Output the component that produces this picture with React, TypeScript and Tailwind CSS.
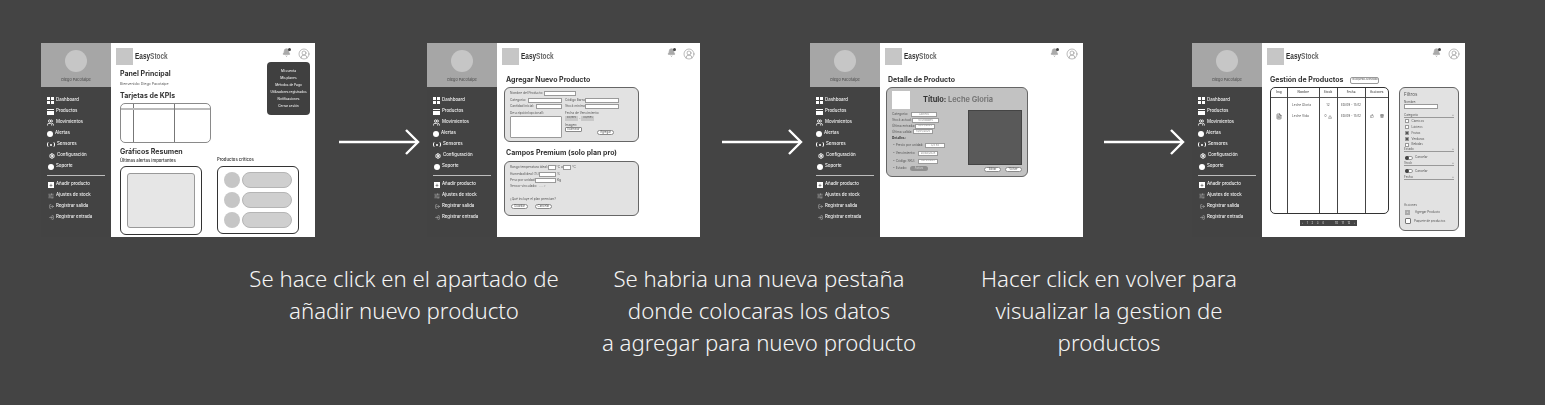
import type { ReactNode } from "react";
import { Bell, CircleUserRound, FileText, LogIn, LogOut, Settings, SlidersHorizontal, Trash2, TriangleAlert, Users, ThumbsUp } from "lucide-react";

const Dash = () => (
  <span className="grid grid-cols-2 gap-[1px] w-[7px] h-[7px]">
    <span className="bg-white" />
    <span className="bg-white" />
    <span className="bg-white" />
    <span className="bg-white" />
  </span>
);
const Box = () => (
  <span className="flex flex-col gap-[1px] w-[7px] h-[6px]">
    <span className="bg-white h-[1.5px]" />
    <span className="bg-white flex-1" />
  </span>
);
const Dot = () => <span className="block w-[6px] h-[6px] rounded-full bg-white" />;
const Sensor = () => (
  <span className="flex items-center gap-[1px] text-white">
    <span className="w-[2px] h-[5px] border-l border-white rounded-l-full" />
    <span className="w-[2px] h-[2px] bg-white rounded-full" />
    <span className="w-[2px] h-[5px] border-r border-white rounded-r-full" />
  </span>
);
const Plus = () => (
  <span className="flex items-center justify-center w-[6px] h-[6px] bg-white text-[#444] text-[6px] leading-none">+</span>
);

const navTop = [
  { label: "Dashboard", icon: <Dash />, gap: "ml-[6px]" },
  { label: "Productos", icon: <Box />, gap: "ml-[6px]" },
  { label: "Movimientos", icon: <Users className="w-[7px] h-[7px] text-white" strokeWidth={3} />, gap: "ml-[6px]" },
  { label: "Alertas", icon: <Dot />, gap: "ml-[6px]" },
  { label: "Sensores", icon: <Sensor />, gap: "ml-[6px]" },
  { label: "Configuración", icon: <Settings className="w-[6px] h-[6px] text-white" strokeWidth={4} />, gap: "ml-[8px]" },
  { label: "Soporte", icon: <Dot />, gap: "ml-[7px]" },
];
const navBottom = [
  { label: "Añadir producto", icon: <Plus /> },
  { label: "Ajustes de stock", icon: <SlidersHorizontal className="w-[6px] h-[6px] text-[#bbb]" strokeWidth={2} /> },
  { label: "Registrar salida", icon: <LogOut className="w-[5px] h-[5px] text-[#ddd]" strokeWidth={2} /> },
  { label: "Registrar entrada", icon: <LogIn className="w-[5px] h-[5px] text-[#ddd]" strokeWidth={2} /> },
];

const Sidebar = () => (
  <aside className="w-[70px] shrink-0 bg-[#434343] text-[#f2f2f2] text-[4.4px] font-medium">
    <div className="h-[44px] bg-[#a6a6a6] flex flex-col items-center pt-[7px]">
      <div className="w-[22px] h-[22px] rounded-full bg-[#c6c6c6]" />
      <div className="mt-[5px] text-[3.8px] text-[#555]">Diego Pacotaipe</div>
    </div>
    <nav className="pt-[8px]">
      {navTop.map((item) => (
        <div key={item.label} className={`flex items-center h-[11px] gap-[2px] ${item.gap}`}>
          {item.icon}
          <span>{item.label}</span>
        </div>
      ))}
      <div className="mx-[6px] mt-[3px] mb-[3px] h-[1px] bg-[#bdbdbd]" />
      {navBottom.map((item) => (
        <div key={item.label} className="flex items-center h-[11px] gap-[2px] ml-[7px]">
          <span className="w-[6px] flex justify-center">{item.icon}</span>
          <span>{item.label}</span>
        </div>
      ))}
    </nav>
  </aside>
);

const Header = () => (
  <header className="flex justify-between pl-[5px] pr-[5px] pt-[5px]">
    <div className="flex items-center gap-[2px]">
      <div className="w-[17px] h-[17px] bg-[#c6c6c6]" />
      <div className="font-['Liberation_Sans_Narrow','Liberation_Sans',sans-serif] font-bold text-[9.5px] text-[#2e2e2e] scale-x-[0.68] origin-left">
        Easy<span className="text-[#666]">Stock</span>
      </div>
    </div>
    <div className="flex items-start gap-[7px]">
      <div className="relative">
        <Bell className="w-[9px] h-[9px] text-[#aaa] fill-[#aaa]" />
        <span className="absolute right-0 top-0 w-[3px] h-[3px] rounded-full bg-[#444]" />
      </div>
      <CircleUserRound className="w-[12px] h-[12px] text-[#777]" strokeWidth={1} />
    </div>
  </header>
);

const Screen = ({ children, width = "w-[273px]" }: { children: ReactNode; width?: string }) => (
  <div className={`${width} h-[194px] flex shrink-0 bg-white overflow-hidden blur-[0.3px]`}>
    <Sidebar />
    <div className="relative flex-1 min-w-0">
      <Header />
      {children}
    </div>
  </div>
);

const Title = ({ children, className = "" }: { children: ReactNode; className?: string }) => (
  <h2 className={`text-[7px] leading-[10px] font-bold text-[#333] whitespace-nowrap ${className}`}>{children}</h2>
);

const Input = ({ w, text = "" }: { w: string; text?: string }) => (
  <span className={`${w} h-[5px] inline-flex items-center justify-center bg-white border border-[#9a9a9a] text-[2.6px] text-[#888] shrink-0 whitespace-nowrap overflow-hidden`}>
    {text}
  </span>
);
const Btn = ({ children, className = "w-[17px]" }: { children: ReactNode; className?: string }) => (
  <span className={`${className} h-[5px] inline-flex items-center justify-center bg-white border border-[#8a8a8a] rounded-full text-[2.8px] text-[#555] whitespace-nowrap`}>
    {children}
  </span>
);

const menu = ["Mi cuenta", "Mis planes", "Métodos de Pago", "Utilizadores registrados", "Notificaciones", "Cerrar sesión"];

const PanelScreen = () => (
  <Screen width="w-[274px]">
    <div className="pl-[9px] pr-[14px]">
      <Title className="mt-[4px]">Panel Principal</Title>
      <p className="mt-[3px] text-[3.6px] leading-[5px] text-[#555]">Bienvenido: Diego Pacotaipe</p>
      <Title className="mt-[4px]">Tarjetas de KPIs</Title>
      <div className="mt-[2px] w-[91px] h-[40px] border border-[#8a8a8a] rounded-[5px] grid grid-cols-[13px_41px_1fr] overflow-hidden">
        <div className="border-r border-[#777]"><div className="mt-[4px] h-[2px] bg-[#bbb] w-[91px]" /></div>
        <div className="border-r border-[#777]" />
        <div />
      </div>
      <Title className="mt-[4px]">Gráficos Resumen</Title>
      <div className="flex mt-[1px] gap-[15px]">
        <div className="w-[82px]">
          <div className="text-[4.2px] leading-[6px] font-semibold text-[#444] whitespace-nowrap">Últimas alertas importantes</div>
          <div className="mt-[2px] h-[69px] border border-[#333] rounded-[6px] p-[6px]">
            <div className="h-full bg-[#e6e6e6] border border-[#999] rounded-[3px]" />
          </div>
        </div>
        <div className="w-[82px] -mt-[1px]">
          <div className="text-[4.2px] leading-[6px] font-semibold text-[#444] whitespace-nowrap">Productos críticos</div>
          <div className="mt-[3px] h-[68px] border border-[#333] rounded-[6px] flex flex-col justify-center gap-[4px] px-[6px]">
            {[0, 1, 2].map((n) => (
              <div key={n} className="flex items-center gap-[2px]">
                <div className="w-[16px] h-[16px] rounded-full bg-[#c6c6c6]" />
                <div className="flex-1 h-[16px] rounded-full bg-[#cfcfcf] border border-[#b5b5b5]" />
              </div>
            ))}
          </div>
        </div>
      </div>
    </div>
    <div className="absolute right-[5px] top-[19px] w-[43px] h-[53px] rounded-[4px] bg-[#404040] flex flex-col items-center justify-center gap-[3px] text-[3.2px] leading-[4px] font-medium text-[#eee]">
      {menu.map((m) => (
        <div key={m} className="whitespace-nowrap">{m}</div>
      ))}
    </div>
  </Screen>
);

const AddScreen = () => (
  <Screen>
    <div className="pl-[7px] text-[3.2px] text-[#555] whitespace-nowrap">
      <Title className="mt-[10px] pl-[2px]">Agregar Nuevo Producto</Title>
      <div className="mt-[2px] w-[135px] h-[55px] bg-[#e2e2e2] border border-[#666] rounded-[6px] px-[5px] pt-[3px]">
        <div className="flex items-center h-[5px] gap-[1px]"><span className="w-[33px]">Nombre del Producto:</span><Input w="w-[32px]" /></div>
        <div className="flex items-center h-[6px] mt-[1.5px]">
          <span className="w-[18px]">Categoría:</span><Input w="w-[34px]" />
          <span className="ml-[3px] w-[20px]">Código Barra:</span><Input w="w-[34px]" />
        </div>
        <div className="flex items-center h-[6px]">
          <span className="w-[26px]">Cantidad inicial:</span><Input w="w-[26px]" />
          <span className="ml-[3px] w-[20px]">Stock mínimo:</span><Input w="w-[34px]" />
        </div>
        <div className="flex mt-[1px]">
          <div className="w-[52px]">
            <div className="leading-[4px]">Descripción(opcional):</div>
            <div className="mt-[1px] h-[22px] bg-white border border-[#9a9a9a] rounded-[1px]" />
          </div>
          <div className="ml-[3px] flex-1">
            <div className="leading-[4px]">Fecha de Vencimiento:</div>
            <div className="flex items-center mt-[1px] gap-[1px]">
              <span className="w-[13px] h-[5px] bg-[#c8c8c8] text-[2.6px] flex items-center justify-center">00/mes</span>
              <span>-</span>
              <span className="w-[13px] h-[5px] bg-[#c8c8c8] text-[2.6px] flex items-center justify-center">00/mes</span>
            </div>
            <div className="mt-[2px] leading-[4px]">Imagen:</div>
            <div className="flex">
              <Btn className="w-[17px] !rounded-[1px]">Examinar</Btn>
              <Btn className="w-[17px] ml-[15px] mt-[3px]">Agregar</Btn>
            </div>
          </div>
        </div>
      </div>
      <Title className="mt-[6px] pl-[2px]">Campos Premium (solo plan pro)</Title>
      <div className="mt-[3px] w-[135px] h-[55px] bg-[#e2e2e2] border border-[#666] rounded-[6px] px-[5px] pt-[2px]">
        <div className="flex items-center h-[7px]"><span className="w-[38px]">Rango temperatura ideal:</span><Input w="w-[8px]" /><span className="w-[7px] text-center">°C a</span><Input w="w-[8px]" /><span className="ml-[1px]">°C</span></div>
        <div className="flex items-center h-[6px]"><span className="w-[29px]">Humedad ideal (%):</span><Input w="w-[17px]" /><span className="ml-[1px]">%</span></div>
        <div className="flex items-center h-[6px]"><span className="w-[25px]">Peso por unidad:</span><Input w="w-[21px]" /><span className="ml-[1px]">Kg</span></div>
        <div className="flex items-center h-[6px] gap-[2px]"><span>Sensor vinculado:</span><span className="text-[#aaa]">--- ▾</span></div>
        <div className="mt-[7px] leading-[6px]">¿Qué incluye el plan premium?</div>
        <div className="flex gap-[7px] mt-[2px] ml-[1px]"><Btn>Guardar</Btn><Btn>Cancelar</Btn></div>
      </div>
    </div>
  </Screen>
);

const details = [
  { label: "Categoría:", value: "Lácteos", w: "w-[26px]", lw: "w-[19px]" },
  { label: "Stock actual:", value: "10 unidades", w: "w-[27px]", lw: "w-[20px]" },
  { label: "Última entrada:", value: "10/05/2025", w: "w-[20px]", lw: "w-[23px]" },
  { label: "Última salida:", value: "14/05/2025", w: "w-[20px]", lw: "w-[21px]" },
];
const extras = [
  { label: "• Precio por unidad:", value: "S/3.50", w: "w-[20px]", lw: "w-[32px]", h: "h-[8px]" },
  { label: "• Vencimiento:", value: "20/06/2025", w: "w-[20px]", lw: "w-[25px]", h: "h-[7.5px]" },
  { label: "• Código SKU:", value: "00745-293", w: "w-[20px]", lw: "w-[25px]", h: "h-[7.5px]" },
];

const DetailScreen = () => (
  <Screen>
    <div className="pl-[6px] text-[3.2px] text-[#555] whitespace-nowrap">
      <Title className="mt-[10px] pl-[2px]">Detalle de Producto</Title>
      <div className="mt-[2px] w-[142px] h-[90px] bg-[#c2c2c2] border border-[#666] rounded-[6px] px-[5px] pt-[3px] flex flex-col">
        <div className="flex items-center">
          <div className="w-[18px] h-[18px] bg-white" />
          <div className="ml-[13px] text-[7.4px] font-bold text-[#333]">Título: <span className="text-[#777]">Leche Gloria</span></div>
        </div>
        <div className="flex flex-1">
          <div className="w-[75px] pt-[3px]">
            {details.map((d) => (
              <div key={d.label} className="flex items-center h-[5.7px]"><span className={d.lw}>{d.label}</span><Input w={d.w} text={d.value} /></div>
            ))}
            <div className="font-bold leading-[6px] text-[#333]">Detalles:</div>
            <div className="pl-[1px] mt-[1px]">
              {extras.map((d) => (
                <div key={d.label} className={`flex items-center ${d.h}`}><span className={d.lw}>{d.label}</span><Input w={d.w} text={d.value} /></div>
              ))}
              <div className="flex items-center h-[7px]"><span className="w-[17px]">• Estado:</span><span className="w-[18px] h-[5px] rounded-full bg-[#8f8f8f] text-[2.8px] text-[#ddd] flex items-center justify-center">Activo</span></div>
            </div>
          </div>
          <div className="flex-1 pl-[5px] pt-[1px]">
            <div className="w-[54px] h-[55px] bg-[#595959] border border-[#444]" />
            <div className="flex justify-end gap-[4px] mt-[2px]"><Btn>Editar</Btn><Btn>Volver</Btn></div>
          </div>
        </div>
      </div>
    </div>
  </Screen>
);

const cols = [
  { name: "Img", w: "w-[17px]" },
  { name: "Nombre", w: "w-[31.5px]" },
  { name: "Stock", w: "w-[18px]" },
  { name: "Fecha", w: "w-[28px]" },
  { name: "Acciones", w: "flex-1" },
];

const Check = ({ on }: { on?: boolean }) => (
  <span className={`w-[4px] h-[4px] border border-[#999] ${on ? "bg-[#555]" : "bg-white"}`} />
);
const Toggle = () => (
  <span className="flex items-center gap-[2px]">
    <span className="flex items-center w-[8px] h-[4px] rounded-full bg-white border border-[#999]">
      <span className="-ml-[1px] w-[4px] h-[4px] rounded-full bg-[#444]" />
    </span>
    <span>Cancelar</span>
  </span>
);
const FilterHead = ({ label }: { label: string }) => (
  <div className="flex justify-between border-b border-[#999] leading-[4px] h-[5px]"><span>{label}</span><span>+</span></div>
);

const categorias: [string, boolean][] = [["Cárnicos", false], ["Lácteos", false], ["Frutas", true], ["Verduras", true], ["Bebidas", false]];

const ProductsScreen = () => (
  <Screen>
    <div className="pl-[8px] text-[3.2px] text-[#555] whitespace-nowrap">
      <div className="flex items-center mt-[10px]">
        <Title>Gestión de Productos</Title>
        <span className="ml-[7px] w-[29px] h-[7px] rounded-[2px] border border-[#999] flex items-center justify-center text-[2.6px]">Búsqueda Avanzada</span>
      </div>
      <div className="flex mt-[2px]">
        <div className="w-[119px] shrink-0">
          <div className="h-[127px] border border-[#333] rounded-[5px] flex overflow-hidden">
            {cols.map((c, i) => (
              <div key={c.name} className={`${c.w} ${i < 4 ? "border-r border-[#444]" : ""} flex flex-col items-center`}>
                <div className="h-[10px] w-full border-b border-[#555] flex items-center justify-center text-[3px] font-semibold">{c.name}</div>
                {i === 0 && <FileText className="mt-[15px] w-[6px] h-[7px] text-[#555]" strokeWidth={2.5} />}
                {i === 1 && <div className="mt-[5px] flex flex-col gap-[6.5px] w-full pl-[4px]"><span>Leche Gloria</span><span>Leche Vida</span></div>}
                {i === 2 && <div className="mt-[5px] flex flex-col items-center gap-[6.5px]"><span>12</span><span className="flex items-center gap-[1px] h-[5px]">0 <TriangleAlert className="w-[4px] h-[4px]" /></span></div>}
                {i === 3 && <div className="mt-[5px] flex flex-col items-center gap-[6.5px]"><span>ED/09 - 15/12</span><span>ED/09 - 15/12</span></div>}
                {i === 4 && <div className="mt-[16px] flex items-center gap-[6px]"><ThumbsUp className="w-[4px] h-[4px]" /><Trash2 className="w-[4px] h-[4px]" strokeWidth={3} /></div>}
              </div>
            ))}
          </div>
          <div className="mt-[6px] ml-[30px] w-[57px] h-[6px] bg-[#444] text-[#ddd] text-[2.8px] flex items-center justify-between px-[2px]">
            <span>‹</span><span>1</span><span>2</span><span>3</span><span>4</span><span className="w-[4px]" /><span>10</span><span>11</span><span>12</span><span>›</span>
          </div>
        </div>
        <div className="ml-[10px] w-[60px] h-[144px] bg-[#e2e2e2] border border-[#666] rounded-[6px] px-[4px] pt-[4px] flex flex-col text-[3px]">
          <div className="text-[4.6px] leading-[6px]">Filtros</div>
          <div className="mt-[2px] leading-[4px]">Nombre:</div>
          <div className="h-[5px] w-[34px] bg-white border border-[#999]" />
          <div className="mt-[4px]"><FilterHead label="Categoría" /></div>
          <div className="flex flex-col gap-[2px] mt-[1.5px] pl-[1px]">
            {categorias.map(([label, on]) => (
              <div key={label} className="flex items-center gap-[2.5px] h-[3.8px]"><Check on={on} /><span>{label}</span></div>
            ))}
          </div>
          <div className="mt-[1px]"><FilterHead label="Estado" /></div>
          <div className="mt-[3px] pl-[1px]"><Toggle /></div>
          <div className="mt-[1px]"><FilterHead label="Stock" /></div>
          <div className="mt-[3px] pl-[1px]"><Toggle /></div>
          <div className="mt-[2px]"><FilterHead label="Fecha" /></div>
          <div className="mt-auto leading-[4px]">Acciones</div>
          <div className="flex items-center gap-[5px] mt-[3px] pl-[1px] h-[6px]"><span className="w-[5px] h-[5px] bg-[#aaa] text-white flex items-center justify-center">+</span><span>Agregar Producto</span></div>
          <div className="flex items-center gap-[3px] mt-[2.5px] mb-[6px] pl-[1px] h-[6px]"><span className="w-[6px] h-[6px] bg-white border border-[#777] rounded-[1px]" /><span>Paquete de productos</span></div>
        </div>
      </div>
    </div>
  </Screen>
);

const Arrow = () => (
  <svg className="mt-[83px] w-[81px] h-[32px] shrink-0" viewBox="0 0 81 32" fill="none" stroke="#fff" strokeWidth="2.4">
    <path d="M0 16H79" />
    <path d="M67 4L79 16L67 28" />
  </svg>
);

const captions = [
  { lines: ["Se hace click en el apartado de", "añadir nuevo producto"], cls: "w-[340px] ml-[193px]" },
  { lines: ["Se habria una nueva pestaña", "donde colocaras los datos", "a agregar para nuevo producto"], cls: "w-[340px] ml-[15px]" },
  { lines: ["Hacer click en volver para", "visualizar la gestion de", "productos"], cls: "w-[300px] ml-[30px]" },
];

export default function App() {
  return (
    <div className="w-[1545px] h-[405px] bg-[#444444] overflow-hidden font-['Inter',sans-serif] pt-[43px] pl-[41px]">
      <div className="flex">
        <PanelScreen />
        <div className="w-[112px] flex justify-center pl-[16px]"><Arrow /></div>
        <AddScreen />
        <div className="w-[110px] flex justify-center pl-[14px]"><Arrow /></div>
        <DetailScreen />
        <div className="w-[109px] flex justify-center pl-[14px]"><Arrow /></div>
        <ProductsScreen />
      </div>
      <div className="flex mt-[26px] font-['Noto_Sans',sans-serif] font-light text-[22.2px] leading-[32px] text-[#f5f5f5]">
        {captions.map((c) => (
          <p key={c.lines[0]} className={`${c.cls} text-center shrink-0`}>
            {c.lines.map((l) => (
              <span key={l} className="block whitespace-nowrap">{l}</span>
            ))}
          </p>
        ))}
      </div>
    </div>
  );
}
